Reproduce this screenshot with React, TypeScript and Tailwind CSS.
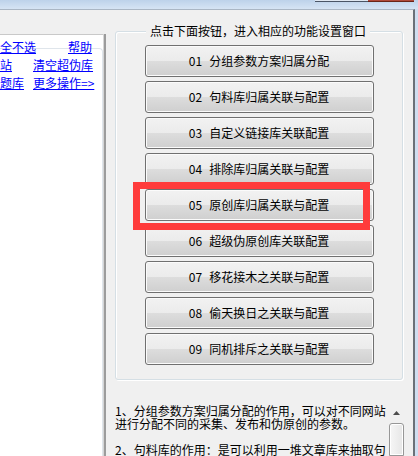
export default function App() {
  const buttons: [string, string][] = [
    ["01", "分组参数方案归属分配"],
    ["02", "句料库归属关联与配置"],
    ["03", "自定义链接库关联配置"],
    ["04", "排除库归属关联与配置"],
    ["05", "原创库归属关联与配置"],
    ["06", "超级伪原创库关联配置"],
    ["07", "移花接木之关联与配置"],
    ["08", "偷天换日之关联与配置"],
    ["09", "同机排斥之关联与配置"],
  ];
  return (
    <div className="relative w-[418px] h-[456px] overflow-hidden bg-[#cfdef0] font-['Noto_Sans_CJK_SC',sans-serif] text-[12px] text-black">
      <div className="relative h-[9px] bg-gradient-to-b from-[#bdd2ea] to-[#d6e4f4]">
        <div className="absolute left-[315px] top-0 w-[53px] h-[2px] bg-[#dfe7f1] border-b border-[#4a5566]" />
        <div className="absolute left-[368px] top-0 w-[46px] h-[2px] bg-[#b04a3a] border-b border-[#6a2418]" />
      </div>
      <div className="flex w-[415px] h-[447px] bg-[#f0f0f0] border-t border-r-2 border-t-[#aab6c4] border-r-[#6b7178]">
        {/* left column */}
        <div className="flex flex-col w-[106px]">
          <div className="h-[24px]" />
          <div className="flex flex-1">
            <div className="w-[103px] bg-white border-t border-[#c9c9c9] flex flex-col">
              <div className="mt-[13px] flex-1 border-t border-r border-[#dfe5eb] rounded-tr-[4px]">
                <div className="-mt-[11px] leading-[18px] text-[#0000ff] whitespace-nowrap">
                  <div className="flex">
                    <span className="underline">全不选</span>
                    <span className="underline ml-[32px]">帮助</span>
                  </div>
                  <div className="flex">
                    <span className="underline w-[33px]">站</span>
                    <span className="underline">清空超伪库</span>
                  </div>
                  <div className="flex">
                    <span className="underline w-[33px]">题库</span>
                    <span className="underline">更多操作=&gt;</span>
                  </div>
                </div>
              </div>
            </div>
            <div className="w-[1px] bg-[#d6d6d6]" />
            <div className="w-[2px] bg-[#9c9c9c]" />
          </div>
        </div>
        {/* right column */}
        <div className="ml-[9px] w-[289px] flex flex-col pt-[14px]">
          <div className="relative z-10 self-start ml-[31px] px-[4px] bg-[#f0f0f0] leading-[14px] -mb-[7px] whitespace-nowrap">
            点击下面按钮，进入相应的功能设置窗口
          </div>
          <div className="w-[288px] h-[349px] border border-[#d5dfe5] rounded-[3px] shadow-[inset_1px_1px_0_#ffffff,1px_1px_0_#ffffff] pt-[13px] flex flex-col items-center gap-[4px]">
            {buttons.map(([n, t]) => (
              <div
                key={n}
                className="w-[229px] h-[32px] shrink-0 rounded-[3px] border border-[#707070] bg-[linear-gradient(to_bottom,#f2f2f2_0%,#ebebeb_50%,#dddddd_50%,#cfcfcf_100%)] shadow-[inset_0_0_0_1px_#fbfbfb] flex items-center justify-center leading-none whitespace-nowrap"
              >
                <span>{n}</span>
                <span className="ml-[7px]">{t}</span>
              </div>
            ))}
          </div>
          <div className="mt-[23px] flex flex-1 min-h-0">
            <div className="w-[274px] pt-[1px] leading-[13px] whitespace-nowrap overflow-hidden">
              <div>1、分组参数方案归属分配的作用，可以对不同网站</div>
              <div>进行分配不同的采集、发布和伪原创的参数。</div>
              <div className="h-[13px]" />
              <div>2、句料库的作用：是可以利用一堆文章库来抽取句</div>
            </div>
            <div className="w-[15px] flex flex-col">
              <div className="h-[19px] flex items-center justify-center">
                <svg width="7" height="4" viewBox="0 0 7 4">
                  <polygon points="3.5,0 7,4 0,4" fill="#4c4c4c" />
                </svg>
              </div>
              <div className="mt-[1px] flex-1 rounded-t-[3px] border border-[#979797] bg-[linear-gradient(to_right,#f6f6f6,#e6e6e6)] shadow-[inset_0_0_0_1px_#ffffff]" />
            </div>
          </div>
        </div>
      </div>
      <div className="absolute left-[133px] top-[182px] w-[237px] h-[48px] border-[7px] border-[#ff3b3b]" />
    </div>
  );
}
